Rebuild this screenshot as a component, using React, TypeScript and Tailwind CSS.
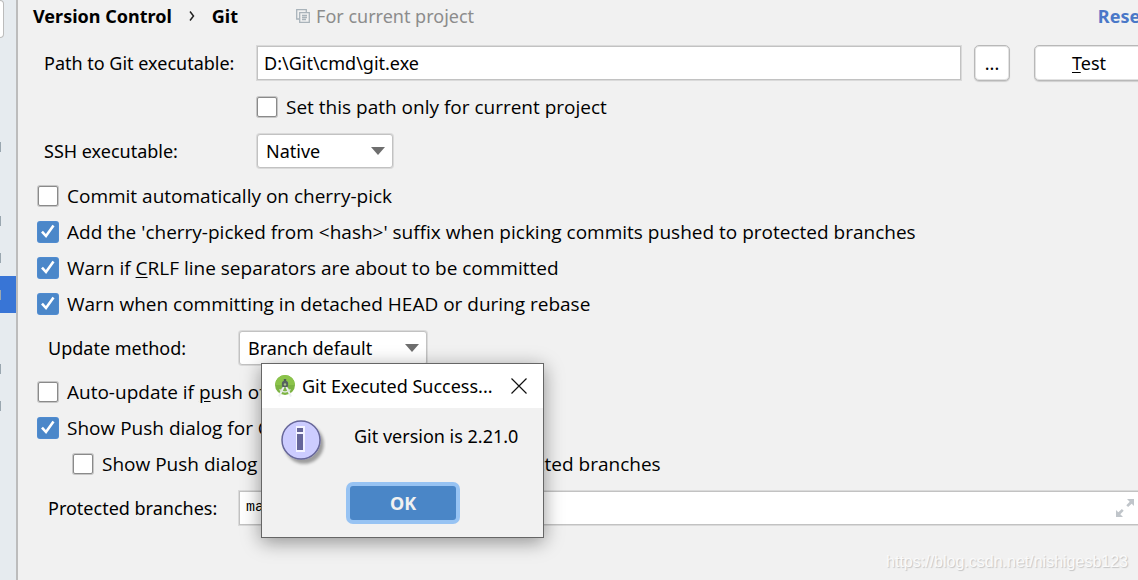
import { ReactNode } from "react";
import clsx from "clsx";

interface CheckRowProps {
  children: ReactNode;
  checked?: boolean;
  className?: string;
}

const CheckRow = ({ children, checked = false, className }: CheckRowProps) => (
  <label className={clsx("flex h-9 items-center gap-2", className)}>
    <span className="grid size-[22px] shrink-0 place-items-center">
      <input
        type="checkbox"
        defaultChecked={checked}
        className="peer col-start-1 row-start-1 size-5 appearance-none rounded-[2px] border border-[#8a8a8a] bg-white ring-1 ring-[#c6c6c6] checked:border-[#4b87c9] checked:bg-[#4b87c9] checked:ring-[#4f8bd0]"
      />
      <svg
        viewBox="0 0 22 22"
        className="pointer-events-none invisible col-start-1 row-start-1 size-[22px] peer-checked:visible"
        fill="none"
        stroke="white"
        strokeWidth="2.6"
      >
        <path d="M5 10.600 9 15 16.500 4.600" />
      </svg>
    </span>
    <span className="font-['Open_Sans','Noto_Sans',sans-serif] text-[19px] whitespace-nowrap">
      {children}
    </span>
  </label>
);

interface DropDownProps {
  id: string;
  options: string[];
  className?: string;
}

const DropDown = ({ id, options, className }: DropDownProps) => (
  <div className={clsx("grid shrink-0 items-center p-px", className)}>
    <select
      id={id}
      className="col-start-1 row-start-1 h-[34px] w-full appearance-none rounded-[3px] border border-[#c2c2c2] bg-white pl-2 ring-1 ring-[#dadada]"
    >
      {options.map((option) => (
        <option key={option}>{option}</option>
      ))}
    </select>
    <svg
      viewBox="0 0 14 8"
      className="pointer-events-none col-start-1 row-start-1 mr-2 h-2 w-3.5 justify-self-end"
    >
      <path d="M0 0h14L7 8z" fill="#6e6e6e" />
    </svg>
  </div>
);

const treeRows = [
  { marked: true },
  { marked: false },
  { marked: true },
  { marked: true },
  { marked: true, selected: true },
  { marked: false },
  { marked: true },
  { marked: true },
];

const Sidebar = () => (
  <aside className="w-[18px] shrink-0 overflow-hidden border-r-2 border-[#bcbcbc] bg-[#e6ebef]">
    <div className="h-[38px] w-1 rounded-r-[4px] border border-l-0 border-[#bcbcbc] bg-white" />
    <ul className="mt-[90px]">
      {treeRows.map((row, index) => (
        <li
          key={index}
          className={clsx(
            "flex h-[37px] items-center",
            row.selected && "bg-[#3875d6]"
          )}
        >
          {row.marked && <span className="h-2.5 w-px bg-[#9aa7b0]" />}
        </li>
      ))}
    </ul>
  </aside>
);

const AndroidStudioIcon = () => (
  <svg viewBox="0 0 22 24" className="h-6 w-[22px] shrink-0">
    <circle cx="11" cy="11" r="10" fill="#7cb342" />
    <path d="M11 1a10 10 0 0 1 10 10H1A10 10 0 0 1 11 1z" fill="#8bc34a" />
    <path d="M11 5v4" stroke="#4d5a55" strokeWidth="2.400" />
    <path
      d="M10 12 5 22.500M12 12l5 10.500"
      stroke="#eceff1"
      strokeWidth="2"
    />
    <path
      d="M5.500 15.500q5.500 5 11 0"
      stroke="#dfe7dc"
      strokeWidth="1.200"
      fill="none"
    />
    <path d="M8 13.500 9 9h4l1 4.500-3-1.500z" fill="#566160" />
    <circle cx="11" cy="10" r="3.200" fill="#566160" />
    <circle cx="11" cy="10.500" r="1.200" fill="#a5c585" />
  </svg>
);

const InfoIcon = () => (
  <svg viewBox="0 0 46 48" className="h-12 w-[46px] shrink-0">
    <defs>
      <filter id="info-shadow" x="-20%" y="-20%" width="150%" height="150%">
        <feDropShadow dx="3" dy="4" stdDeviation="1.8" floodOpacity="0.35" />
      </filter>
    </defs>
    <circle
      cx="21"
      cy="20"
      r="19"
      fill="#ccccff"
      stroke="#666699"
      strokeWidth="1.500"
      filter="url(#info-shadow)"
    />
    <path d="M16 6h9v26h-9z" fill="#f4f4ff" />
    <path d="M17 8h6v4h-6zM17 14h6v16h-6z" fill="#666699" />
  </svg>
);

const GitDialog = () => (
  <div
    role="dialog"
    aria-labelledby="dialog-title"
    className="absolute top-[363px] left-[261px] w-[283px] border border-[#666666] bg-[#f1f1f1] shadow-[0_4px_18px_rgba(0,0,0,0.4)]"
  >
    <div className="flex h-11 items-center bg-white pl-3">
      <AndroidStudioIcon />
      <h2 id="dialog-title" className="ml-1.5 whitespace-nowrap">
        Git Executed Success...
      </h2>
      <button aria-label="Close" className="mr-4 ml-auto">
        <svg
          viewBox="0 0 16 16"
          className="size-4"
          stroke="#111111"
          strokeWidth="1.200"
        >
          <path d="M.5.5l15 15M15.500.5l-15 15" />
        </svg>
      </button>
    </div>
    <div className="flex pt-3 pl-[18px]">
      <InfoIcon />
      <p className="ml-7 pt-1 whitespace-nowrap">Git version is 2.21.0</p>
    </div>
    <div className="flex justify-center pt-[18px] pb-[17px] pl-px">
      <button className="h-[34px] w-[106px] rounded-[3px] bg-[#4a86c7] font-bold text-[#f1f1f1] ring-4 ring-[#97c3f3]">
        OK
      </button>
    </div>
  </div>
);

const App = () => {
  return (
    <div className="relative flex h-screen overflow-hidden bg-[#f1f1f1] font-['Noto_Sans','Open_Sans',sans-serif] text-[18px] leading-6 text-black">
      <Sidebar />
      <main className="-mr-1.5 min-w-0 flex-1">
        <header className="-mr-1 flex h-8 items-center pl-[15px] font-bold">
          <span>Version Control</span>
          <svg
            viewBox="0 0 6 10"
            className="mx-[17px] h-2.5 w-1.5"
            fill="none"
            stroke="#222222"
            strokeWidth="1.500"
          >
            <path d="M1 .5 4.500 5 1 9.500" />
          </svg>
          <h1>Git</h1>
          <svg
            viewBox="0 0 14 14"
            className="mr-1.5 ml-[58px] size-3.5"
            fill="none"
            stroke="#a9b3ba"
            strokeWidth="1.300"
          >
            <path d="M3 10H.7V.7h9.600V3M3.700 3.700h9.600v9.600H3.700zM6 6.500h5M6 8.500h5M6 10.500h4" />
          </svg>
          <span className="font-normal text-[#8c8c8c]">
            For current project
          </span>
          <a href="#reset" className="ml-auto text-[#4a78c8]">
            Reset
          </a>
        </header>

        <form className="flex flex-col gap-2 pt-[13px]">
          <div className="flex flex-col gap-2 pb-px">
            <div className="flex items-center pl-[26px]">
              <label htmlFor="git-path" className="w-[212px] shrink-0">
                Path to Git executable:
              </label>
              <div className="flex min-w-0 flex-1 p-px">
                <input
                  id="git-path"
                  defaultValue="D:\Git\cmd\git.exe"
                  className="h-[34px] w-full border border-[#c2c2c2] bg-white pl-1.5 ring-1 ring-[#dadada]"
                />
              </div>
              <button
                type="button"
                className="ml-3 h-9 w-9 rounded-[5px] border border-[#b8b8b8] bg-white shadow-[0_1px_1px_#cfcfcf,inset_0_0_0_1px_#e2e2e2]"
              >
                ...
              </button>
              <button
                type="button"
                className="ml-6 h-9 w-[110px] rounded-[5px] border border-[#b8b8b8] bg-white shadow-[0_1px_1px_#cfcfcf,inset_0_0_0_1px_#e2e2e2]"
              >
                <u className="underline-offset-2">T</u>est
              </button>
            </div>

            <CheckRow className="pl-[238px]">
              Set this path only for current project
            </CheckRow>

            <div className="flex items-center pl-[26px]">
              <label htmlFor="ssh" className="w-[212px] shrink-0">
                SSH executable:
              </label>
              <DropDown
                id="ssh"
                options={["Native", "Built-in"]}
                className="w-[138px]"
              />
            </div>
          </div>

          <div className="pl-[19px]">
            <CheckRow>Commit automatically on cherry-pick</CheckRow>
            <CheckRow checked>
              Add the 'cherry-picked from &lt;hash&gt;' suffix when picking
              commits pushed to protected branches
            </CheckRow>
            <CheckRow checked>
              Warn if <u className="underline-offset-2">C</u>RLF line separators
              are about to be committed
            </CheckRow>
            <CheckRow checked>
              Warn when committing in detached HEAD or during rebase
            </CheckRow>
          </div>

          <div className="flex items-center pl-[30px]">
            <label htmlFor="update-method" className="w-[190px] shrink-0">
              Update method:
            </label>
            <DropDown
              id="update-method"
              options={["Branch default", "Merge", "Rebase"]}
              className="w-[190px]"
            />
          </div>

          <div className="pl-[19px]">
            <CheckRow>
              Auto-update if <u className="underline-offset-2">p</u>ush of the
              branch was rejected
            </CheckRow>
            <CheckRow checked>Show Push dialog for Commit and Push</CheckRow>
            <CheckRow className="pl-[35px]">
              Show Push dialog only when committing to protected branches
            </CheckRow>
          </div>

          <div className="flex items-center pl-[30px]">
            <label htmlFor="protected" className="w-[190px] shrink-0">
              Protected branches:
            </label>
            <div className="flex min-w-0 flex-1 p-px">
              <div className="flex h-[34px] w-full items-center border border-[#c2c2c2] bg-white pr-2 pl-1.5 ring-1 ring-[#dadada]">
                <input
                  id="protected"
                  defaultValue="master"
                  className="min-w-0 flex-1 font-['Liberation_Mono',monospace] text-[15px]"
                />
                <svg viewBox="0 0 18 18" className="size-[18px]" fill="#c0c5ca">
                  <path d="M11 0h7v7l-2.300-2.300-3.600 3.300-1.800-1.800 3.400-3.500zM0 11l2.300 2.300 3.600-3.300 1.800 1.800-3.400 3.500L7 18H0z" />
                </svg>
              </div>
            </div>
          </div>
        </form>
      </main>

      <GitDialog />
      <p className="absolute right-2.5 bottom-1.5 font-['Liberation_Sans',sans-serif] text-[16px] text-[#fafafa] [text-shadow:1px_1px_1px_#c4c4c4]">
        https://blog.csdn.net/nishigesb123
      </p>
    </div>
  );
};

export default App;
